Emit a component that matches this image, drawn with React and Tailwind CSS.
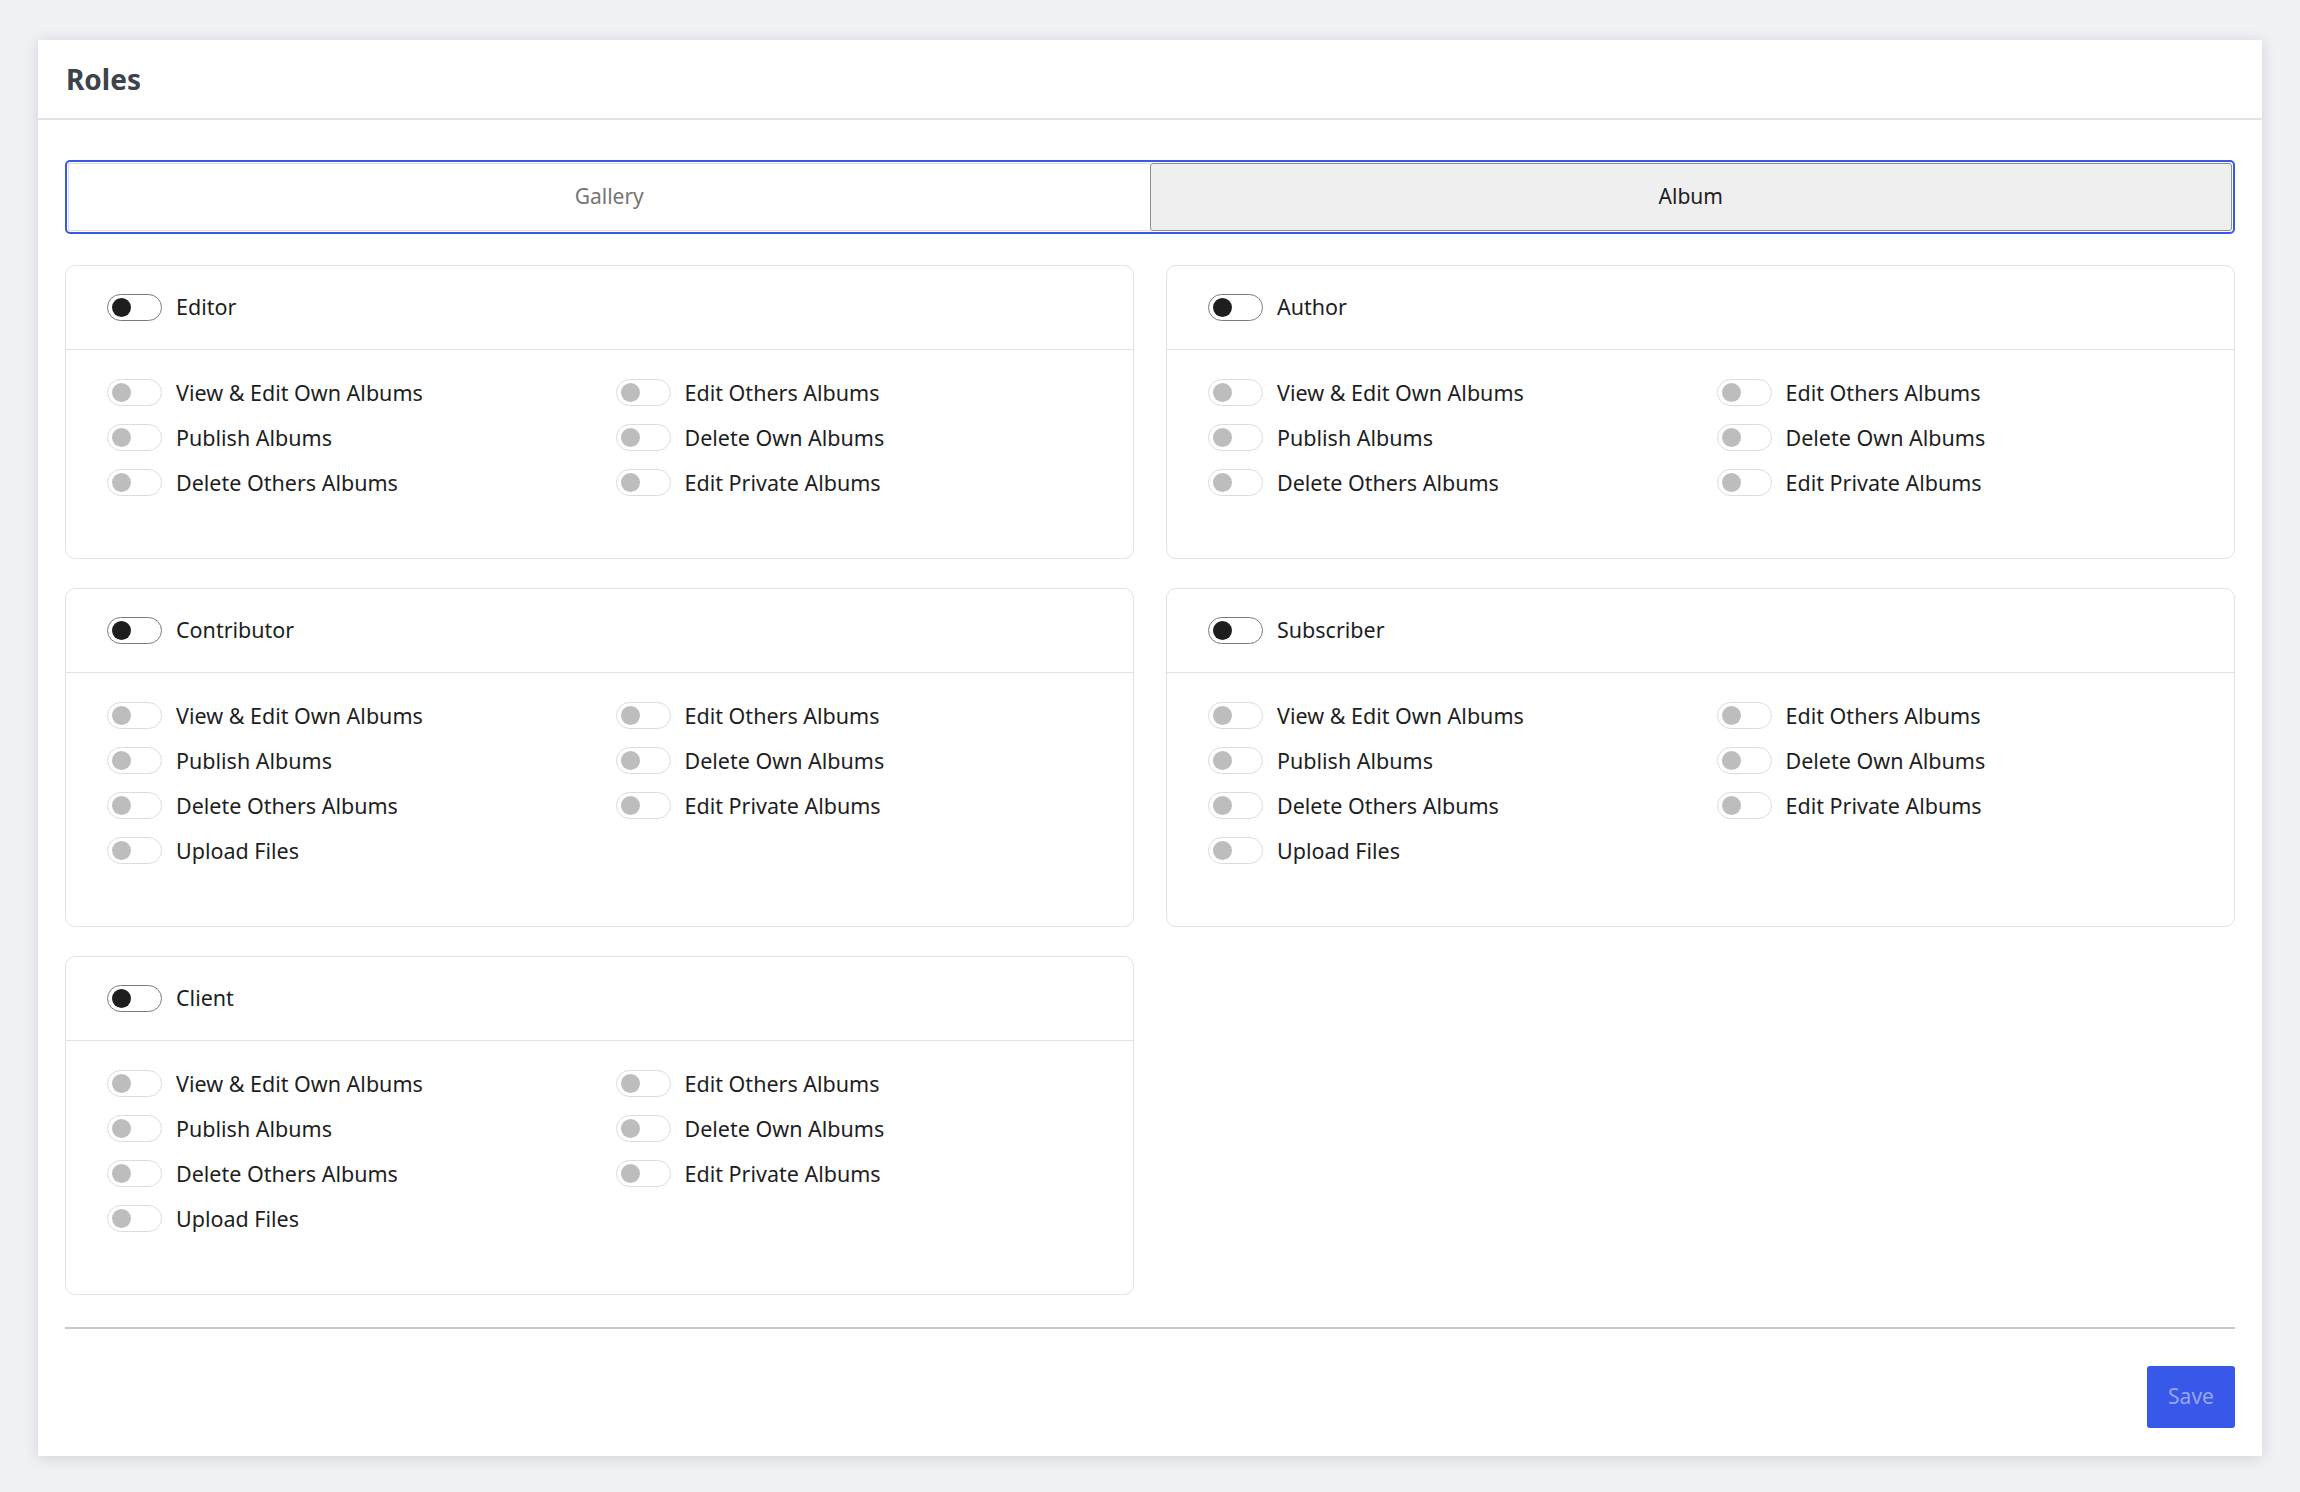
const perms = [
  'View & Edit Own Albums',
  'Edit Others Albums',
  'Publish Albums',
  'Delete Own Albums',
  'Delete Others Albums',
  'Edit Private Albums',
];

const roles = [
  { name: 'Editor', upload: false },
  { name: 'Author', upload: false },
  { name: 'Contributor', upload: true },
  { name: 'Subscriber', upload: true },
  { name: 'Client', upload: true },
];

const Toggle = ({ dark }) => (
  <span
    className={
      dark
        ? 'flex items-center w-[55px] h-[27px] rounded-full border-[1.5px] border-[#7a7a7a] bg-white pl-[4px] shrink-0'
        : 'flex items-center w-[55px] h-[27px] rounded-full border-[1.5px] border-[#dcdcdc] bg-white pl-[4px] shrink-0'
    }
  >
    <span className={dark ? 'w-[19px] h-[19px] rounded-full bg-[#1e1e1e]' : 'w-[19px] h-[19px] rounded-full bg-[#bdbdbd]'} />
  </span>
);

const RoleCard = ({ role }) => {
  const items = role.upload ? [...perms, 'Upload Files'] : perms;
  return (
    <div className="border border-[#e2e2e2] rounded-[10px] bg-white">
      <div className="flex items-center gap-[14px] h-[84px] px-[41px] border-b border-[#e2e2e2]">
        <Toggle dark />
        <span className="text-[21.5px] text-[#1e1e1e]">{role.name}</span>
      </div>
      <div className="grid grid-cols-2 gap-x-8 gap-y-[18px] px-[41px] pt-[29px] pb-[62px]">
        {items.map((p) => (
          <div key={p} className="flex items-center gap-[14px]">
            <Toggle />
            <span className="text-[21.5px] leading-[27px] text-[#1e1e1e]">{p}</span>
          </div>
        ))}
      </div>
    </div>
  );
};

export default function App() {
  return (
    <div
      className="min-h-screen bg-[#f0f1f5] pt-[40px] px-[38px] pb-[38px]"
      style={{ fontFamily: '"Noto Sans", sans-serif' }}
    >
      <div className="bg-white shadow-[0_2px_14px_rgba(0,0,0,0.13)]">
        <div className="h-[80px] flex items-center px-[28px] border-b-2 border-[#e4e4e4]">
          <h1 className="text-[28px] font-bold text-[#3c434a]">Roles</h1>
        </div>
        <div className="px-[27px] pt-[40px] pb-[28px]">
          <div className="border-2 border-[#3858e9] rounded-[5px] p-[1px] flex h-[74px]">
            <button className="flex-1 flex items-center justify-center border-y border-l border-[#dcdcdc] text-[21px] text-[#757575]">
              Gallery
            </button>
            <button className="flex-1 flex items-center justify-center border border-[#8c8f94] rounded-[3px] bg-[#efefef] text-[21px] text-[#1e1e1e]">
              Album
            </button>
          </div>
          <div className="grid grid-cols-2 gap-x-[32px] gap-y-[29px] mt-[31px] items-start">
            {roles.map((r) => (
              <RoleCard key={r.name} role={r} />
            ))}
          </div>
          <div className="h-[2px] bg-[#c8c9cc] mt-[32px]" />
          <div className="flex justify-end mt-[37px]">
            <button className="w-[88px] h-[62px] rounded-[3px] bg-[#3858e9] text-[21px] text-[#97a6f2]">
              Save
            </button>
          </div>
        </div>
      </div>
    </div>
  );
}
